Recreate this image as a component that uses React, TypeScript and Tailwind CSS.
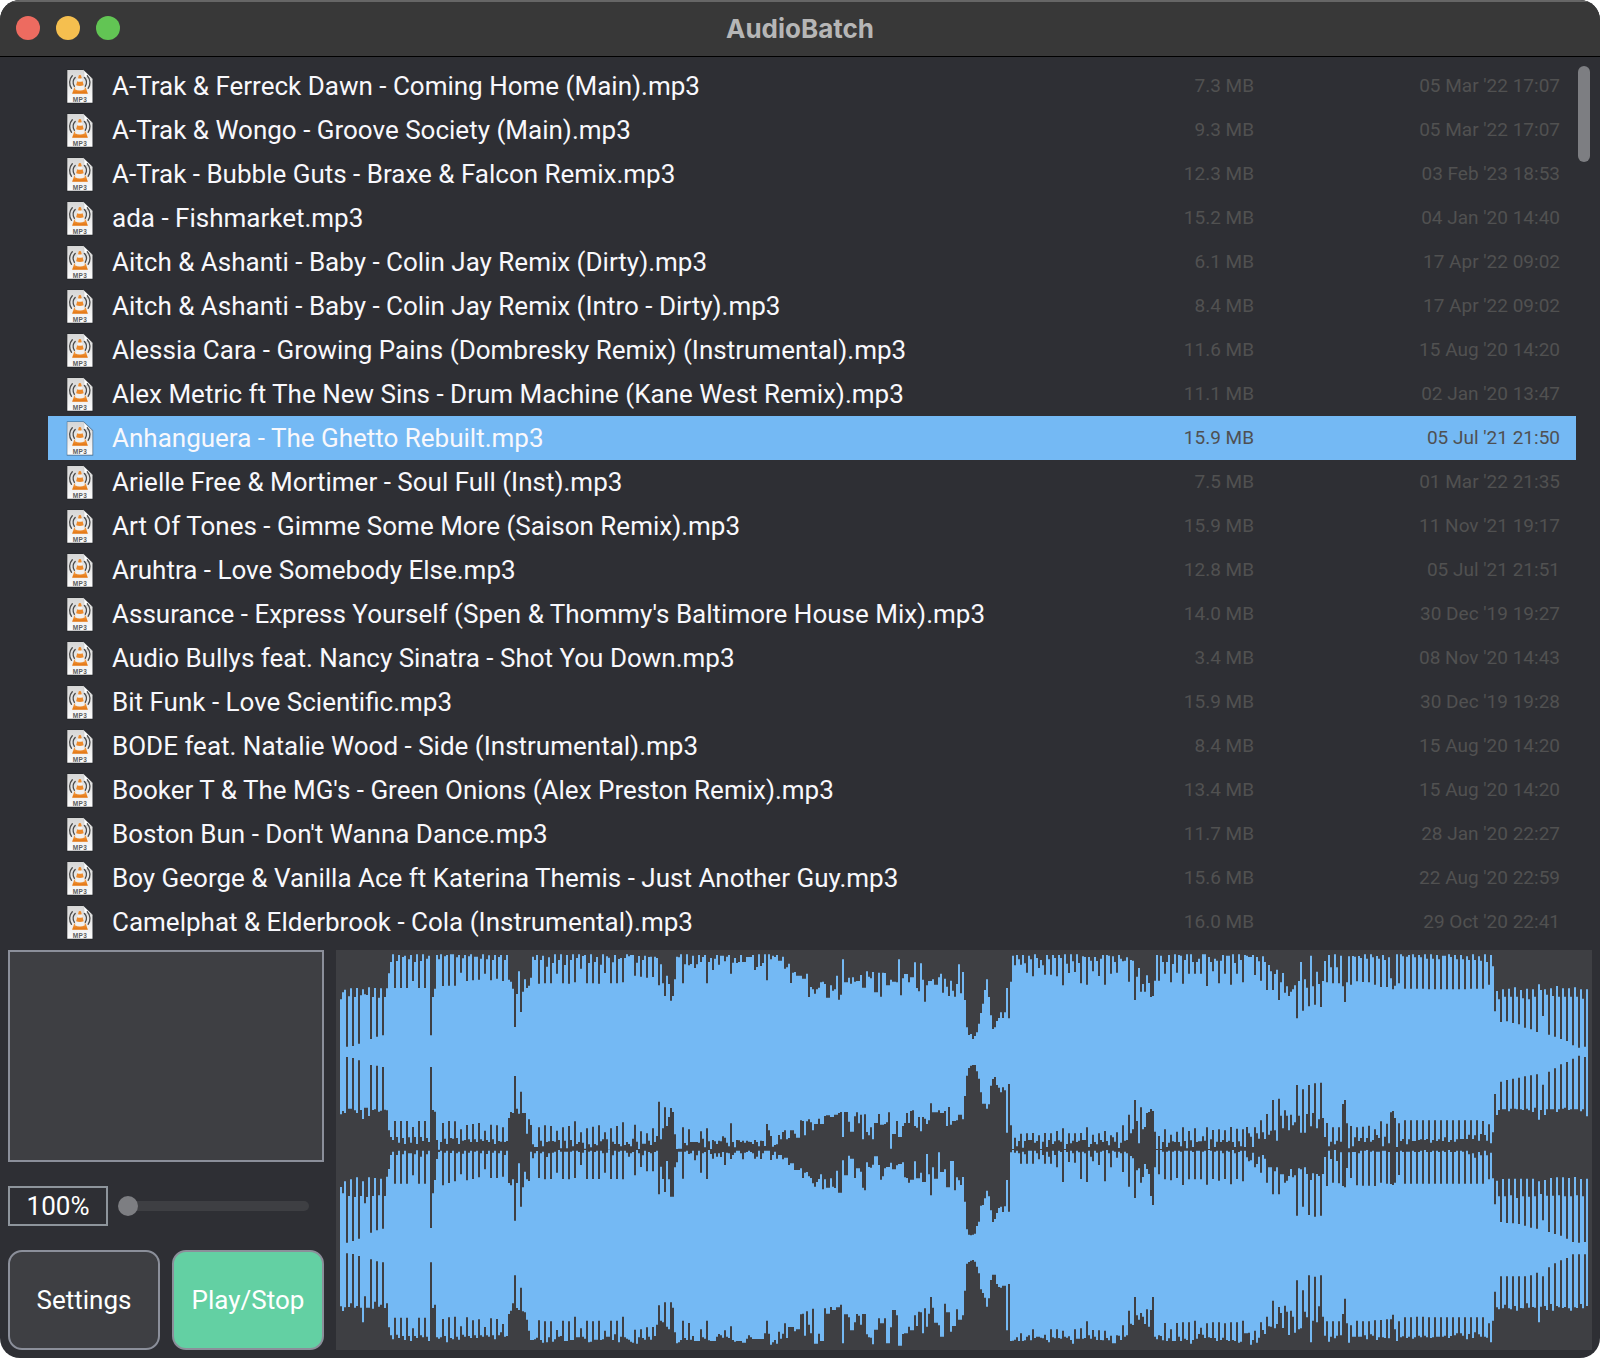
const TRACKS: [string, string, string][] = [
  ["A-Trak & Ferreck Dawn - Coming Home (Main).mp3", "7.3 MB", "05 Mar '22 17:07"],
  ["A-Trak & Wongo - Groove Society (Main).mp3", "9.3 MB", "05 Mar '22 17:07"],
  ["A-Trak - Bubble Guts - Braxe & Falcon Remix.mp3", "12.3 MB", "03 Feb '23 18:53"],
  ["ada - Fishmarket.mp3", "15.2 MB", "04 Jan '20 14:40"],
  ["Aitch & Ashanti - Baby - Colin Jay Remix (Dirty).mp3", "6.1 MB", "17 Apr '22 09:02"],
  ["Aitch & Ashanti - Baby - Colin Jay Remix (Intro - Dirty).mp3", "8.4 MB", "17 Apr '22 09:02"],
  ["Alessia Cara - Growing Pains (Dombresky Remix) (Instrumental).mp3", "11.6 MB", "15 Aug '20 14:20"],
  ["Alex Metric ft The New Sins - Drum Machine (Kane West Remix).mp3", "11.1 MB", "02 Jan '20 13:47"],
  ["Anhanguera - The Ghetto Rebuilt.mp3", "15.9 MB", "05 Jul '21 21:50"],
  ["Arielle Free & Mortimer - Soul Full (Inst).mp3", "7.5 MB", "01 Mar '22 21:35"],
  ["Art Of Tones - Gimme Some More (Saison Remix).mp3", "15.9 MB", "11 Nov '21 19:17"],
  ["Aruhtra - Love Somebody Else.mp3", "12.8 MB", "05 Jul '21 21:51"],
  ["Assurance - Express Yourself (Spen & Thommy's Baltimore House Mix).mp3", "14.0 MB", "30 Dec '19 19:27"],
  ["Audio Bullys feat. Nancy Sinatra - Shot You Down.mp3", "3.4 MB", "08 Nov '20 14:43"],
  ["Bit Funk - Love Scientific.mp3", "15.9 MB", "30 Dec '19 19:28"],
  ["BODE feat. Natalie Wood - Side (Instrumental).mp3", "8.4 MB", "15 Aug '20 14:20"],
  ["Booker T & The MG's - Green Onions (Alex Preston Remix).mp3", "13.4 MB", "15 Aug '20 14:20"],
  ["Boston Bun - Don't Wanna Dance.mp3", "11.7 MB", "28 Jan '20 22:27"],
  ["Boy George & Vanilla Ace ft Katerina Themis - Just Another Guy.mp3", "15.6 MB", "22 Aug '20 22:59"],
  ["Camelphat & Elderbrook - Cola (Instrumental).mp3", "16.0 MB", "29 Oct '20 22:41"],
];
const SELECTED = 8;

/*
 * Waveform envelopes, one value per 2px column in thirds of a pixel. Each
 * envelope is stored in four blocks; "x:y" pins a value to a block position,
 * and bare values follow on in the next columns.
 */
const BLOCK_START = [0, 930, 1860, 2820];
const COLUMNS = 624;

const LEFT_TOP = [
  "30:178 157 149 48:320 169 145 66:318 171 144 84:311 166 148 163 165 142 120:297 171 144 138:290 173 145 156:286 171 145 174:100 66 43 192:144 63 45 210:144 51 47 228:144 58 45 246:123 66 43 264:144 63 43 282:144 56 47 300:286 171 146 318:45 58 43 336:138 49 45 354:137 43 43 372:137 52 45 390:98 55 45 408:123 49 43 426:121 50 50 444:119 56 43 462:101 58 46 480:121 60 45 498:116 51 45 516:123 60 45 534:119 125 146 552:261 162 94 570:216 155 118 588:144 137 113 606:50 60 45 624:131 60 47 642:130 80 52 660:130 69 43 678:101 60 43 696:130 75 45 714:131 60 43 732:127 54 43 750:86 48 45 768:130 69 43 786:130 66 51 804:131 74 43 822:99 49 53 840:130 67 45 858:130 57 54 876:127 54 43 49 45 45 912:107 68 48",
  "0:110 60 47 18:113 51 50 36:111 50 54:136 48:54 54:136 73 130 72:168 107 132 90:182 168 118 108:50 52 43 126:130 73 43 144:76 72 47 162:84 73 45 180:66 51 45 198:130 66 54 216:90 56 45 234:74 47 47 252:64 50 45 270:101 68 54 288:69 66 45 306:66 66 51 51 51 336:45 342:90 81 43 360:78 69 43 378:121 43 390:58 47 51 45 62 62 426:50 86 82 444:71 129 98 462:96 107 107 107 486:116 116 498:101 504:171 141 148 522:161 148 143 540:127 125 132 558:173 173 136 576:152 148 107 594:179 164 58 612:127 127 113 630:131 112 125 123 123 660:105 666:143 143 94 684:110 115 96 702:157 157 98 720:170 98 99 738:136 136 119 756:125 125 127 774:58 166 115 792:102 102 127 112 112 822:67 144 154 840:70 119 185 858:136 123 123 876:118 134 134 894:112 101 158 912:116 140 168",
  "0:122 152 170 132 73 30:160 96 180 48:262 285 282 66:297 288 277 84:251 219 191 102:150 118 171 120:226 267 262 138:243 234 217 156:234 217 144 174:235 125 47 192:76 45 58 210:74 45 70 228:98 47 58 246:109 43 54 264:84 60 76 282:104 45 58 300:104 45 54 318:109 45 54 336:136 43 71 354:99 43 64 372:96 43 69 390:130 49 51 408:134 51 62 426:94 51 63 444:108 56 45 43 462:134 45 47 480:101 49 66 498:98 45 56 516:64 62 52 534:125 60 62 552:180 110 84 570:155 132 155 588:106 129 171 606:168 122 45 624:122 47 66 642:101 66 45 660:127 72 43 678:98 45 47 696:131 60 43 714:101 43 66 732:101 66 56 750:101 43 43 768:138 51 66 786:94 56 62 804:130 62 45 822:101 47 47 840:134 43 69 858:101 43 60 876:127 45 47 51 51 45 912:105 51 64 930:122 49 66 948:150 75 92",
  "0:94 150 102 18:89 180 127 36:99 158 139 54:168 155 148 72:136 235 123 90:66 212 118 108:143 199 47 126:139 194 95 144:132 201 123 162:63 127 45 180:82 130 43 198:82 130 47 216:139 186 127 234:49 134 48 50 258:124 48 54 276:126 43 56 294:127 43 52 312:134 48 56 330:141 45 60 348:141 52 115 366:148 137 43 384:130 43 49 402:146 50 45 420:146 43 52 438:146 45 52 456:146 43 56 474:148 43 56 492:148 45 58 510:148 47 47 528:148 43 51 546:148 45 58 564:148 45 58 582:148 49 60 600:146 43 60 618:146 49 62 636:146 43 66 654:134 45 79 672:214 153 178 690:246 148 170 708:244 146 170 726:249 142 170 744:253 150 175 762:263 146 178 780:268 148 170 798:276 133 150 816:228 148 164 834:284 145 168 852:290 138 170 870:297 145 170 888:303 145 170 906:316 142 170 924:323 148 176 942:320 148",
];

const LEFT_BOTTOM = [
  "30:523 513 519 48:351 506 506 66:354 511 519 84:361 510 537 102:503 503 528 120:375 510 508 138:377 515 512 156:381 509 511 174:571 591 600 192:543 591 608 210:543 594 612 228:543 592 608 246:561 591 612 264:543 591 603 282:543 594 606 300:381 510 515 318:600 629 606 336:549 596 612 354:543 594 596 372:544 594 612 390:568 602 600 408:555 598 606 426:552 598 606 444:549 598 603 462:572 600 606 480:554 598 612 498:556 603 605 516:562 606 603 534:534 516 519 552:408 506 521 570:455 519 519 588:581 538 555 606:613 621 621 624:562 602 619 642:556 606 604 660:558 603 605 678:572 600 625 696:562 602 625 714:558 600 619 732:544 612 606 750:577 608 626 768:565 613 622 786:560 612 616 804:556 604 598 822:577 598 629 840:565 605 612 858:558 612 619 876:547 615 606 894:612 619 596 912:554 605 627",
  "0:574 611 611 18:580 602 615 36:565 606 588 54:485 598 565 72:502 558 531 90:504 516 583 108:627 626 626 126:562 609 616 144:568 606 606 606 606 608 180:574 596 622 198:565 604 627 216:600 604 612 234:602 604 589 252:593 608 619 270:550 606 622 288:600 601 606 306:602 608 602 605 606 612 342:600 606 619 360:602 603 618 378:552 571 588 396:620 615 613 414:585 598 576 432:571 598 594 450:571 571 581 468:593 593 541 486:543 586 544 504:538 547 571 522:552 552 536 540:552 552 528 558:526 526 531 531 524 524 524 594:519 516 591 612:516 516 545 630:575 575 529 648:517 550 524 666:598 523 576 684:586 562 598 702:549 549 522 720:554 554 552 738:547 517 626 756:582 582 543 774:591 591 558 792:549 519 549 810:513 511 558 828:563 531 574 846:531 536 552 864:541 490 517 517 517 894:511 519 519 912:513 539 501".replace("912:513 539 501", "912:513 558 501"),
  "0:554 543 543 541 524 524 36:538 468 407 54:384 377 375 72:375 394 416 90:457 491 491 108:506 493 437 126:417 411 435 144:443 457 442 162:451 578 432 180:556 627 593 198:619 603 581 216:623 603 580 234:600 600 579 252:608 603 586 270:627 605 579 288:621 600 580 306:612 604 573 324:601 605 565 342:627 612 580 360:610 602 580 378:606 602 579 396:600 600 562 414:621 612 584 432:606 613 580 450:600 606 573 468:603 616 586 486:592 605 577 504:624 608 556 522:602 600 524 540:580 568 480 558:543 610 502 576:568 561 519 594:516 507 513 612:575 627 588 630:627 606 568 648:621 608 584 666:604 606 575 684:606 619 562 702:603 625 573 720:601 621 565 738:606 604 570:0 750:604 589 602 768:562 627 598 786:570 621 605 804:568 606 600 822:571 606 602 840:561 606 621 858:566 604 619 876:568 621 561 894:580 590 621 912:562 580 596 930:541 577 597 948:522 584 570",
  "0:572 480 571 18:602 476 527 36:565 511 527 54:571 524 556 72:547 435 527 90:578 448 578 108:522 435 559 126:519 430 565 144:538 428 534 162:591 549 619 180:605 562 613 198:602 562 605 216:492 480 550 234:625 558 619 252:592 562 603 270:594 560 606 288:594 557 605 306:600 568 585 324:594 544 619 342:590 551 610 360:517 513 534 378:621 550 603 396:597 541 613 414:598 541 603 432:603 541 600 450:598 541 600 468:597 541 608 486:600 541 603 504:598 541 603 522:592 541 606 540:600 541 605 558:598 541 597 576:597 541 597 594:584 541 597 612:586 541 602 630:582 543 585 648:602 553 610 666:577 462 525 684:510 425 508 702:508 420 514 720:506 416 506 738:508 413 508 756:510 409 506 774:511 406 516 792:503 403 539 810:510 434 525 828:508 395 508 846:508 385 516 864:508 373 506 882:503 366 510 900:508 356 508 918:508 347 514 936:508 351 529",
];

const RIGHT_TOP = [
  "30:741 760 724 48:908 768 718 66:903 771 712 84:896 768 724 102:790 771 712 120:878 768 714 138:871 766 716 156:866 768 710 174:687 645 635 192:731 645 632 210:731 643 632 228:731 640 640 246:706 643 631 264:731 650 632 282:731 643 632 300:864 760 720 318:657 636 632 336:736 638 632 354:729 639 632 372:724 640 635 390:703 641 632 408:721 638 632 426:717 635 632 444:712 640 632 462:688 642 632 480:714 638 632 498:714 640 632 516:710 645 632 534:729 736 718 552:842 729 670 570:800 742 695 588:718 723 635 606:655 640 633 624:714 640 635 642:718 651 640 660:717 638 635 678:698 630 635 696:717 635 635 714:718 635 632 732:714 632 636 750:675 638 630 768:717 635 632 786:717 636 632 804:717 632 640 822:698 638 630 840:717 646 632 858:717 635 632 876:718 632 638 894:650 640 636 912:706 630 640",
  "0:681 646 632 18:694 636 640 36:694 636 632 54:763 680 717 72:756 663 718 90:770 770 682 108:667 635 635 126:716 635 632 144:642 640 632 162:661 646 632 180:698 640 636 198:717 630 642 216:656 640 650 234:640 651 636 252:675 638 640 270:657 645 638 288:632 632 640 306:658 638 636 632 636 640 342:656 650 632 360:657 640 632 378:632 632 660 396:645 635 656 414:645 645 658 432:653 653 675 450:670 670 690 468:690 690 685 486:714 698 696 504:709 714 730 522:740 726 717 540:703 748 718 558:743 743 715 576:740 744 692 594:758 758 661 612:706 706 647 630:656 656 714 648:685 685 695 666:743 751 667 684:681 683 674 702:649 649 675 720:719 709 685 738:681 681 668 756:688 688 676 774:672 672 667 792:712 714 728 810:719 719 664 828:715 715 698 846:726 726 642 864:703 766 682 882:716 716 637 900:696 696 688 918:742 742",
  "0:663 663 751 712 721 735 36:711 785 868 54:884 886 884 72:881 858 845 90:797 795 775 108:752 769 811 126:846 837 819 144:804 800 816 162:799 720 815 180:637 630 638 198:632 640 671 216:635 643 671 234:632 632 671 252:632 640 658 270:630 645 671 288:635 650 671 306:632 645 682 324:632 636 726 342:630 636 666 360:632 640 668 378:632 637 717 396:635 640 726 414:632 650 664 432:632 638 675 450:635 632 724 468:630 640 682 486:632 635 653 504:635 640 696 522:635 640 740 540:648 655 774 558:691 685 728 576:711 672 687 594:702 768 795 612:682 630 703 630:630 635 718 648:635 632 721 666:635 632 714 684:632 635 735 702:632 632 718 720:632 636 718 738:632 632 718 756:635 632 734 774:630 632 717 792:635 632 722 810:632 640 717 828:632 635 733 846:630 640 717 864:636 632 724 882:632 652 664 900:661 638 682 918:672 650 698 936:645 656 728 954:682",
  "0:682 763 694 18:682 763 703 36:703 728 722 54:708 687 712 72:706 827 685 90:688 800 682 108:702 825 720 126:700 830 702 144:708 827 702 162:651 738 632 180:657 728 630 198:663 730 637 216:738 742 684 234:637 714 636 252:636 736 640 270:632 737 632 288:630 737 635 306:632 738 635 324:635 728 632 342:632 731 636 360:732 735 728 378:636 705 632 396:636 731 635 414:635 731 632 432:636 731 636 450:632 731 630 468:636 731 636 486:632 731 632 504:636 731 632 522:636 731 630 540:636 731 636 558:632 731 632 576:635 731 632 594:643 731 640 612:653 731 636 630:646 731 632 648:646 718 638 666:715 793 722 684:769 846 717 702:769 849 716 720:766 850 716 738:774 852 716 756:769 857 716 774:770 863 716 792:769 866 724 810:762 841 720 828:767 876 714 846:767 882 712 864:766 887 712 882:769 896 714 900:769 906 711 918:766 908 717 936:769 906 716",
];

const RIGHT_BOTTOM = [
  "30:1099 1113 1102 48:940 1101 1090 66:942 1103 1098 84:948 1103 1147 102:1069 1103 1103 120:958 1106 1085 138:964 1100 1094 156:967 1104 1090 174:1162 1186 1198 192:1133 1184 1194 210:1133 1188 1200 228:1133 1188 1203 246:1165 1188 1194 264:1133 1186 1192 282:1133 1190 1203 300:967 1104 1094 318:1192 1196 1192 336:1137 1188 1207 354:1132 1194 1198 372:1130 1190 1199 390:1159 1184 1190 408:1132 1188 1194 426:1141 1186 1194 444:1138 1186 1190 462:1161 1186 1190 480:1135 1186 1198 498:1137 1186 1177 516:1152 1190 1188 534:1122 1112 1090 552:1006 1104 1110 570:1043 1114 1117 588:1139 1172 1200 606:1200 1198 1193 624:1141 1200 1208 642:1144 1207 1192 660:1144 1205 1198 678:1170 1190 1188 696:1142 1203 1203 714:1144 1200 1200 732:1130 1192 1192 750:1165 1190 1196 768:1142 1207 1205 786:1144 1199 1199 804:1142 1200 1198 822:1172 1190 1190 840:1142 1200 1183 858:1142 1207 1190 876:1130 1192 1196 894:1199 1205 1208 912:1169 1211 1192",
  "0:1168 1194 1199 18:1162 1190 1199 36:1161 1188 1154 54:1096 1142 1147 72:1087 1160 1168 90:1087 1103 1177 108:1210 1207 1200 126:1142 1194 1200 144:1149 1199 1188 162:1203 1203 1203 180:1168 1192 1196 198:1142 1201 1203 216:1203 1203 1190 234:1182 1186 1193 252:1171 1190 1194 270:1159 1200 1205 288:1203 1203 1203 306:1208 1208 1196 324:1186 1192 1197 342:1197 1197 1197 1197 1197 1180 378:1142 1181 1214 396:1207 1200 1211 414:1175 1196 1181 432:1150 1194 1161 450:1161 1161 1174 468:1168 1168 1123 486:1121 1187 1114 504:1154 1180 1106 522:1211 1211 1181 540:1203 1203 1105 558:1121 1121 1101 576:1110 1110 1102 594:1102 1094 1210 612:1123 1123 1132 630:1171 1171 1147 648:1122 1127 1154 666:1122 1122 1183 684:1192 1193 1213 702:1169 1169 1135 720:1150 1150 1135 738:1210 1210 1162 756:1110 1110 1126 774:1217 1217 1182 792:1180 1180 1160 810:1171 1171 1126 828:1158 1115 1117 846:1180 1105 1160 864:1121 1071 1103 882:1148 1148 1156 900:1190 1190 1091 918:1117 1117",
  "0:1175 1158 1158 1108 1139 1139 36:1126 1052 971 54:966 962 960 72:965 980 1000 90:1048 1059 1073 108:1100 1075 1020 126:1004 1004 1032 144:1041 1043 1037 162:1037 1171 1032 180:1203 1202 1199 198:1192 1203 1180 216:1203 1201 1190 234:1186 1201 1168 252:1194 1190 1190 270:1193 1195 1184 288:1200 1207 1168 306:1192 1195 1168 324:1194 1196 1172 342:1190 1193 1189 360:1200 1211 1168 378:1196 1196 1165 396:1196 1194 1144 414:1186 1196 1170 432:1190 1200 1171 450:1200 1201 1172 468:1194 1201 1187 486:1210 1210 1186 504:1187 1200 1156 522:1190 1186 1112 540:1151 1155 1071 558:1126 1139 1119 576:1130 1152 1108 594:1160 1110 1071 612:1190 1198 1186 630:1188 1201 1149 648:1203 1195 1168 666:1203 1203 1149 684:1190 1203 1147 702:1196 1200 1147 720:1211 1200 1142 738:1196 1182 1163 756:1184 1194 1150 774:1192 1194 1147 792:1194 1203 1147 810:1200 1193 1150 828:1200 1203 1147 846:1200 1203 1147 864:1208 1205 1142 882:1180 1180 1178 900:1214 1200 1172 918:1208 1193 1147 936:1170 1182 1130 954:1159",
  "0:1160 1082 1165 18:1152 1101 1119 36:1164 1097 1115 54:1185 1112 1130 72:1178 1021 1168 90:1165 1051 1115 108:1132 1006 1207 126:1142 1010 1147 144:1099 1006 1130 162:1187 1144 1205 180:1190 1144 1195 198:1187 1144 1186 216:1122 1076 1150 234:1208 1156 1190 252:1190 1142 1190 270:1190 1144 1186 288:1198 1144 1183 306:1187 1141 1200 324:1192 1140 1192 342:1194 1138 1195 360:1138 1124 1168 378:1203 1144 1192 396:1189 1132 1194 414:1190 1132 1196 432:1192 1130 1187 450:1192 1130 1187 468:1192 1132 1194 486:1192 1132 1190 504:1190 1132 1190 522:1187 1132 1194 540:1188 1132 1186 558:1180 1132 1180 576:1187 1132 1198 594:1182 1132 1194 612:1177 1132 1183 630:1190 1132 1190 648:1193 1150 1207 666:1142 1055 1102 684:1108 1009 1105 702:1094 1009 1105 720:1108 1009 1098 738:1112 1009 1104 756:1105 1009 1090 774:1103 1006 1101 792:1103 998 1147 810:1100 1009 1098 828:1110 982 1092 846:1112 970 1098 864:1102 961 1104 882:1101 954 1105 900:1112 943 1102 918:1104 943 1092 936:1105 943 1098",
];

function decode(blocks: string[]): number[] {
  const out: number[] = new Array(COLUMNS).fill(0);
  blocks.forEach((block, b) => {
    let col = 0;
    for (const token of block.split(" ")) {
      const [a, y] = token.split(":");
      if (y === "0") continue;
      if (y !== undefined) {
        col = Math.round((BLOCK_START[b] + Number(a) - 30) / 6);
        out[col] = Number(y);
      } else {
        out[col] = Number(a);
      }
      col++;
    }
  });
  for (let i = 1; i < COLUMNS; i++) if (!out[i]) out[i] = out[i - 1];
  return out;
}

function channelPath(top: string[], bottom: string[]): string {
  const t = decode(top);
  const b = decode(bottom);
  return t.map((y, i) => `M${i * 6} ${y}h6V${b[i]}h-6z`).join("");
}

const LEFT_PATH = channelPath(LEFT_TOP, LEFT_BOTTOM);
const RIGHT_PATH = channelPath(RIGHT_TOP, RIGHT_BOTTOM);

function Waveform() {
  return (
    <svg className="h-full w-full" viewBox="-12 30 3768 1200" preserveAspectRatio="none" fill="#74b9f4">
      <path d={LEFT_PATH} />
      <path d={RIGHT_PATH} />
    </svg>
  );
}

function Mp3Icon() {
  return (
    <svg className="h-[35px] w-7 shrink-0" viewBox="0 0 28 35">
      <defs>
        <linearGradient id="sheet" x1="0" y1="0" x2="0" y2="1">
          <stop offset="0" stopColor="#d6d6d6" />
          <stop offset="1" stopColor="#fdfdfd" />
        </linearGradient>
        <linearGradient id="cone" x1="0" y1="0" x2="0" y2="1">
          <stop offset="0" stopColor="#f5a04a" />
          <stop offset="1" stopColor="#e2720c" />
        </linearGradient>
      </defs>
      <path d="M.8.5h17L27.200 9.500v25H.8z" fill="#1c1d20" opacity=".55" />
      <path d="M1.300 1h16l9.200 9v23.700H1.300z" fill="url(#sheet)" />
      <path d="M17.300 1c1.200 2.500 1 5 .4 7.500 3-.6 6-.3 8.800 1.500z" fill="#fff" stroke="#bbb" strokeWidth=".4" />
      <g fill="none" stroke="#4a4a4a" strokeWidth="1.300" strokeLinecap="round">
        <path d="M6.300 6.800c-3.400 3.600-3.400 8.800-.8 12.500M9.200 8.500c-2.300 2.300-2.500 6-.8 8.800" />
        <path d="M21.300 6.800c3.400 3.600 3.400 8.800.8 12.500M18.400 8.500c2.300 2.300 2.500 6 .8 8.800" />
      </g>
      <path d="M8.300 18.500h11.400l2.200 6.300H6.100z" fill="url(#cone)" />
      <path d="M12.800 6.300q1.100-.8 2.200 0l3.900 14q-5 2.400-10 0z" fill="#f1f1f1" />
      <path d="M12.800 6.300q1.100-.8 2.200 0l.8 2.900q-1.900.8-3.800 0zM11.200 12.200q2.700 1.200 5.400 0l1.100 4q-3.800 1.500-7.600 0z" fill="#ee8a2a" />
      <text x="14" y="32.500" textAnchor="middle" fontFamily="Liberation Sans, sans-serif" fontWeight="700" fontSize="6.500" letterSpacing=".3" fill="#5d5d5d">
        MP3
      </text>
    </svg>
  );
}

export default function App() {
  return (
    <div className="h-[1358px] w-[1600px] bg-white">
      <div className="flex h-full w-full flex-col overflow-hidden rounded-[20px] bg-[#2e2f34] font-['Roboto',sans-serif] text-white">
        <header className="relative flex h-[57px] shrink-0 items-center justify-center border-t-2 border-b border-t-[#666666] border-b-black bg-[#383838]">
          <div className="absolute left-4 top-[14px] flex gap-4">
            <span className="size-6 rounded-full bg-[#ed6b60]" />
            <span className="size-6 rounded-full bg-[#f5bf4f]" />
            <span className="size-6 rounded-full bg-[#62c554]" />
          </div>
          <h1 className="-mt-[2px] font-['Inter',sans-serif] text-[26px] font-bold text-[#b6b6b6]">AudioBatch</h1>
        </header>

        <main className="relative mt-[7px] h-[880px] shrink-0 pl-12 pr-6">
          <ul>
            {TRACKS.map(([name, size, date], i) => (
              <li
                key={i}
                className={`flex h-11 items-center pl-[18px] pr-4 ${i === SELECTED ? "bg-[#74b9f4] text-[#4f5052]" : "text-[#515151]"}`}
              >
                <Mp3Icon />
                <span className="ml-[18px] flex-1 whitespace-pre text-[26px] leading-10 text-[#f8f8fc]">{name}</span>
                <span className="w-40 text-right text-[19px]">{size}</span>
                <span className="w-[306px] text-right text-[19px]">{date}</span>
              </li>
            ))}
          </ul>
          <div className="absolute right-[10px] top-[2px] h-24 w-3 rounded-full bg-[#7d7e82]" />
        </main>

        <footer className="mt-[6px] flex h-[400px] shrink-0 gap-3 px-2">
          <aside className="flex w-[316px] flex-col">
            <div className="h-[212px] border-2 border-[#8b8f9a] bg-[#3e3f43]" />
            <div className="mt-6 flex h-10 items-center">
              <div className="flex h-10 w-[100px] items-center justify-center border-2 border-[#8e959c] text-[26px] leading-none">100%</div>
              <div className="relative ml-[15px] h-[10px] w-[186px] rounded-full bg-[#3e3f43]">
                <span className="absolute -left-[5px] -top-[5px] size-5 rounded-full bg-[#7d7e82]" />
              </div>
            </div>
            <div className="mt-6 flex gap-3 text-[26px]">
              <button className="h-[100px] w-[152px] rounded-[14px] border-2 border-[#8b8f9a] bg-[#3e3f43]">Settings</button>
              <button className="h-[100px] w-[152px] rounded-[14px] border-2 border-[#8b8f9a] bg-[#63d0a3]">Play/Stop</button>
            </div>
          </aside>
          <section className="h-[400px] w-[1256px] bg-[#3e3f43]">
            <Waveform />
          </section>
        </footer>
      </div>
    </div>
  );
}
